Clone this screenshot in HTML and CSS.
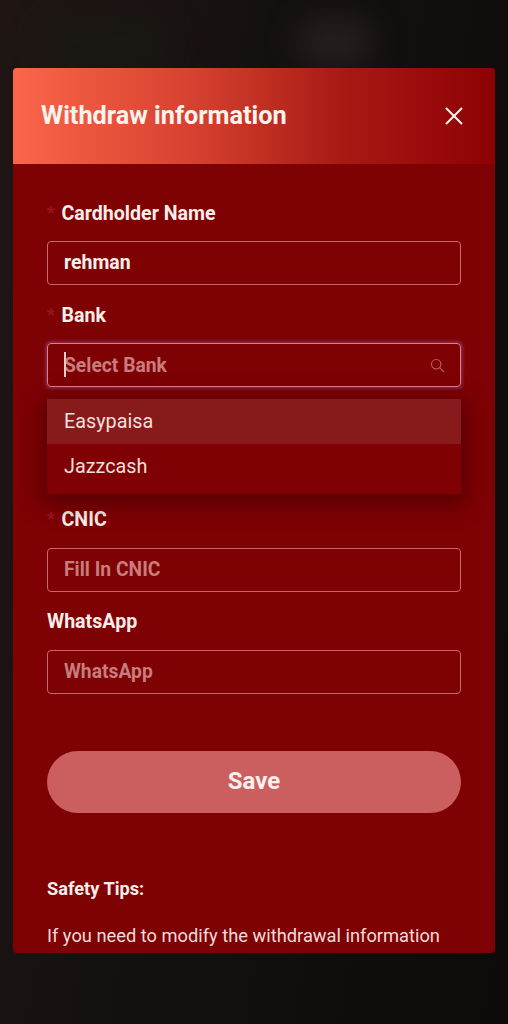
FILE: index.html
```html
<!DOCTYPE html>
<html lang="en">
<head>
<meta charset="utf-8">
<title>Withdraw information</title>
<link rel="stylesheet" href="styles.css">
</head>
<body>
<div class="backdrop">
  <span class="blob blob-left"></span>
  <span class="blob blob-right"></span>
</div>
<main class="modal">
  <header class="modal-header">
    <h1 class="modal-title">Withdraw information</h1>
    <svg class="close-icon" viewBox="0 0 20 20" aria-label="Close"><path d="M2 2 L18 18 M18 2 L2 18"/></svg>
  </header>
  <form class="modal-body">
    <div class="field">
      <label class="label"><span class="star">*</span>Cardholder Name</label>
      <div class="input filled">rehman</div>
    </div>
    <div class="field field-select">
      <label class="label"><span class="star">*</span>Bank</label>
      <div class="input focused">
        <span class="caret"></span>
        <span class="placeholder">Select Bank</span>
        <svg class="search-icon" viewBox="0 0 16 16"><circle cx="6.6" cy="6.6" r="5"/><path d="M10.3 10.3 L15 15"/></svg>
      </div>
      <ul class="dropdown">
        <li class="option active">Easypaisa</li>
        <li class="option">Jazzcash</li>
      </ul>
    </div>
    <div class="field-spacer"></div>
    <div class="field">
      <label class="label"><span class="star">*</span>CNIC</label>
      <div class="input"><span class="placeholder">Fill In CNIC</span></div>
    </div>
    <div class="field">
      <label class="label">WhatsApp</label>
      <div class="input"><span class="placeholder">WhatsApp</span></div>
    </div>
    <button type="button" class="save">Save</button>
    <h2 class="tips-title">Safety Tips:</h2>
    <p class="tips-text">If you need to modify the withdrawal information</p>
  </form>
</main>
</body>
</html>
```
FILE: styles.css
```css
* { box-sizing: border-box; }
html, body { margin: 0; height: 100%; }
body {
  width: 508px;
  height: 1024px;
  overflow: hidden;
  position: relative;
  background: linear-gradient(100deg, #1f1614 0%, #141010 45%, #0e0a0a 100%);
  font-family: Roboto, "Liberation Sans", sans-serif;
  color: #f7e6e3;
  padding: 68px 13px 0;
}
.backdrop { position: absolute; inset: 0; }
.blob { position: absolute; top: 16px; height: 52px; border-radius: 30px; filter: blur(14px); }
.blob-left { left: 40px; width: 130px; background: #1a1813; }
.blob-right { left: 295px; width: 80px; background: #231e1b; }
.modal {
  position: relative;
  width: 482px;
  height: 885px;
  overflow: hidden;
  border-radius: 4px;
  background: #7e0104;
}
.modal-header {
  height: 96px;
  padding: 0 31px 0 28px;
  display: flex;
  align-items: center;
  justify-content: space-between;
  background: linear-gradient(90deg, #fb6549 0%, #d5412f 38%, #a81a14 68%, #8e0103 100%);
}
.modal-title { margin: 0 0 2px; font-size: 25.3px; font-weight: 700; color: #fff3ee; }
.close-icon { width: 20px; height: 20px; fill: none; stroke: #fff3ee; stroke-width: 2; margin-bottom: 1px; }
.modal-body { padding: 34px 34px 0; display: flex; flex-direction: column; }
.field { position: relative; height: 102.25px; }
.field-spacer { height: 102px; }
.label {
  display: flex;
  align-items: center;
  height: 30px;
  font-size: 19.6px;
  font-weight: 700;
  color: #fbeeea;
}
.star { width: 14.5px; color: #96151a; font-size: 20px; font-family: "Liberation Sans", sans-serif; }
.input {
  position: relative;
  height: 44px;
  margin-top: 13px;
  padding: 0 16px 2px;
  display: flex;
  align-items: center;
  border: 1.5px solid #c9686a;
  border-radius: 4px;
  font-size: 19.5px;
  font-weight: 700;
}
.filled { color: #fbeeea; }
.placeholder { padding-top: 2px; color: #c97c7c; font-weight: 700; font-size: 19.3px; }
.focused { box-shadow: 0 0 3px 1.5px rgba(150, 70, 130, 0.55); border-color: #d98387; }
.caret { position: absolute; left: 16px; top: 8px; width: 1.5px; height: 25px; background: #eec9c9; }
.search-icon {
  position: absolute;
  right: 15px;
  top: 14px;
  width: 15px;
  height: 15px;
  fill: none;
  stroke: #b65c5c;
  stroke-width: 1.3;
}
.dropdown {
  position: absolute;
  z-index: 2;
  top: 99px;
  left: 0;
  width: 414px;
  height: 95px;
  margin: 0;
  padding: 0;
  list-style: none;
  background: #7f0104;
  box-shadow: 0 6px 20px 4px rgba(50, 0, 0, 0.55);
}
.option {
  height: 45px;
  padding: 0 0 0 17px;
  display: flex;
  align-items: center;
  font-size: 19.8px;
  color: #f7dfdc;
}
.active { background: #871a1b; }
.save {
  width: 414px;
  height: 62px;
  margin-top: 42px;
  padding-bottom: 3px;
  border: 0;
  border-radius: 31px;
  background: #cb5f5f;
  color: #fff0ee;
  font: 700 24px Roboto, sans-serif;
}
.tips-title { margin: 64px 0 0; font-size: 18.2px; line-height: 24px; font-weight: 700; color: #fbeeea; }
.tips-text { margin: 23px 0 0; font-size: 18.3px; line-height: 24px; color: #f5dcd9; }
```
